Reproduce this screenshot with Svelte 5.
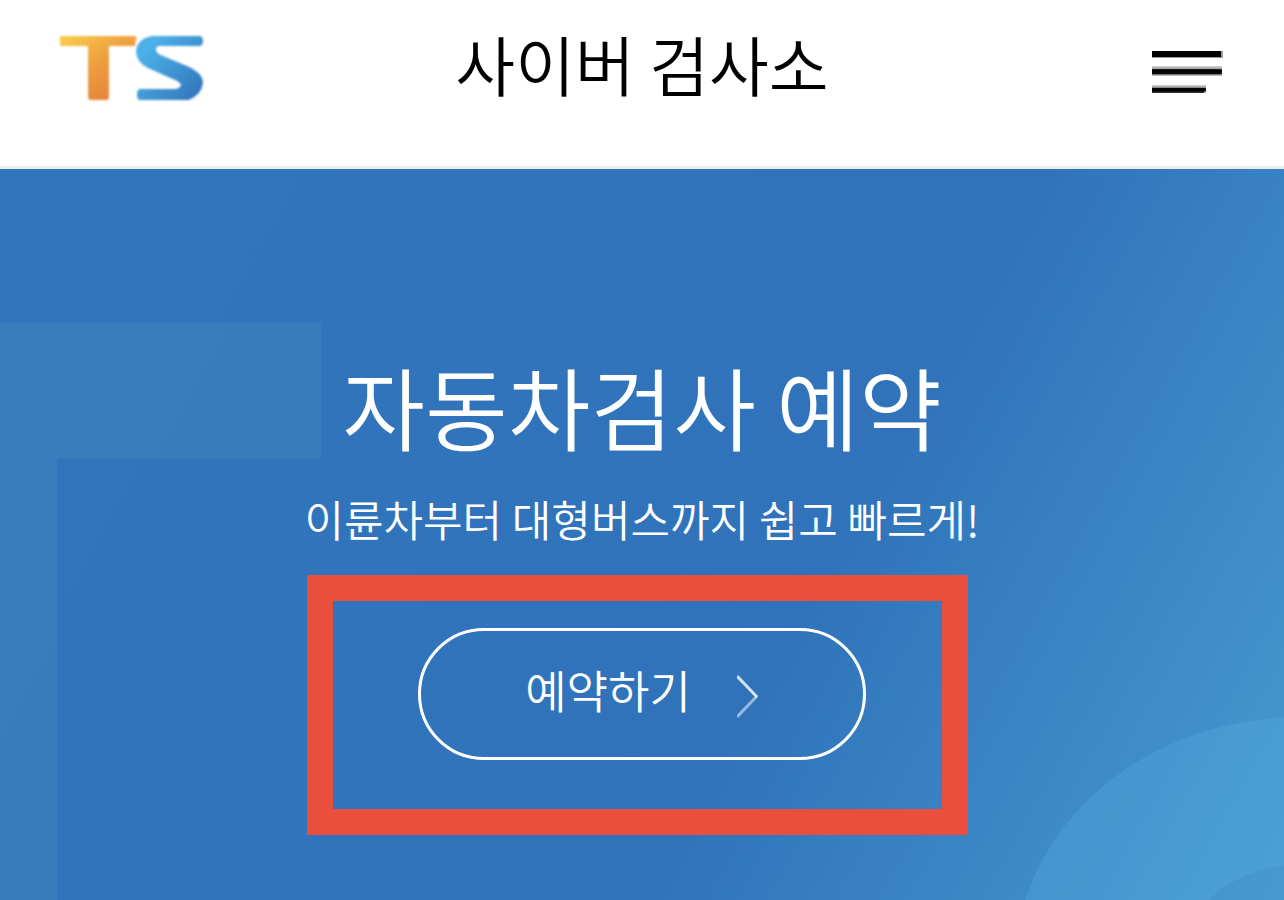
<script>
  const title = '사이버 검사소';
  let menuOpen = $state(false);
</script>

<div class="page">
  <header class="topbar">
    <a class="logo" href="#home" aria-label="TS">
      <svg width="144" height="65" viewBox="0 0 144 65" aria-hidden="true">
        <defs>
          <linearGradient id="orange" x1="0" y1="0" x2="0.7" y2="1">
            <stop offset="0" stop-color="#fbd04a" />
            <stop offset="0.45" stop-color="#eea23f" />
            <stop offset="1" stop-color="#e6823a" />
          </linearGradient>
          <linearGradient id="blue" x1="0" y1="0" x2="1" y2="0.8">
            <stop offset="0.2" stop-color="#4cb0e8" />
            <stop offset="1" stop-color="#3378be" />
          </linearGradient>
          <filter id="soften"><feGaussianBlur stdDeviation="1" /></filter>
        </defs>
        <g filter="url(#soften)">
          <path fill="url(#orange)" d="M0 0H74Q77 0 76 3L75 10H49V61Q49 64 46 64H31Q28 64 28 61V10H0Z" />
          <path
            fill="url(#blue)"
            d="M92 0H139Q143 0 143 5Q143 10 139 10H99Q96 10 96 14Q97 18 103 20L127 30Q143 37 143 47Q142 58 129 64H80Q77 64 77 59Q77 53 80 53H114Q120 53 121 49Q120 46 115 44L88 32Q76 26 76 15Q77 3 92 0Z"
          />
        </g>
      </svg>
    </a>
    <h1>{title}</h1>
    <button
      class="menu"
      aria-label="메뉴"
      aria-expanded={menuOpen}
      onclick={() => (menuOpen = !menuOpen)}
    >
      <svg width="72" height="44" viewBox="0 0 72 44" aria-hidden="true">
        <defs>
          <linearGradient id="bar" x1="0" y1="0" x2="0" y2="1">
            <stop offset="0" stop-color="#000" stop-opacity="0.15" />
            <stop offset="0.3" stop-color="#000" stop-opacity="0.4" />
            <stop offset="0.45" stop-color="#000" />
            <stop offset="0.75" stop-color="#000" stop-opacity="0.85" />
            <stop offset="1" stop-color="#000" stop-opacity="0.1" />
          </linearGradient>
        </defs>
        <rect width="69" height="6" />
        <rect width="71" height="7" opacity="0.4" />
        <rect y="15" width="70" height="10" fill="url(#bar)" />
        <rect y="18" width="69" height="5" opacity="0.7" />
        <rect y="34" width="54" height="8" fill="url(#bar)" />
        <rect y="37" width="52" height="5" opacity="0.75" />
      </svg>
    </button>
  </header>

  <main class="hero">
    <svg class="shape-t" width="321" height="600" viewBox="0 0 321 600" aria-hidden="true">
      <path d="M0 0H321V136H57V600H0Z" />
    </svg>
    <svg class="shape-ring" width="276" height="184" viewBox="0 0 276 184" aria-hidden="true">
      <path
        fill-rule="evenodd"
        d="M7 251A285 250 0 0 1 577 251A285 250 0 0 1 7 251ZM170 251A122 102 0 0 1 414 251A122 102 0 0 1 170 251Z"
      />
    </svg>

    <h2>자동차검사 예약</h2>
    <p>이륜차부터 대형버스까지 쉽고 빠르게!</p>
    <div class="highlight">
      <a class="reserve" href="#reserve">
        <span>예약하기</span>
        <svg width="22" height="44" viewBox="0 0 22 44" aria-hidden="true">
          <path d="M0 2L20 23" opacity="0.8" />
          <path d="M20 22L0 43" opacity="0.5" />
        </svg>
      </a>
    </div>
  </main>
</div>

<style>
  :global(body) {
    margin: 0;
  }

  .page {
    display: flex;
    flex-direction: column;
    min-height: 100vh;
    font-family: "Noto Sans CJK KR", sans-serif;
    font-weight: 350;
    background: #fff;
  }

  .topbar {
    display: grid;
    grid-template-columns: 1fr auto 1fr;
    align-items: start;
    box-sizing: border-box;
    height: 169px;
    padding: 17px 60px 0;
    border-bottom: 3px solid #ececec;
  }

  .logo {
    padding-top: 19px;
  }

  .logo svg,
  .menu svg {
    display: block;
    overflow: visible;
  }

  h1,
  h2,
  p {
    margin: 0;
    font-weight: 350;
  }

  h1 {
    font-size: 65px;
    line-height: 92px;
    color: #000;
  }

  .menu {
    justify-self: end;
    padding: 34px 0 0;
    border: 0;
    background: none;
    cursor: pointer;
  }

  .hero {
    position: relative;
    flex: 1;
    display: flex;
    flex-direction: column;
    align-items: center;
    overflow: hidden;
    padding: 176px 24px 64px;
    background: linear-gradient(119deg, #3175bc 0%, #3073ba 62%, #3984c4 78%, #479ad0 100%);
    color: #fff;
    text-align: center;
  }

  .shape-t {
    position: absolute;
    top: 154px;
    left: 0;
    fill: rgba(90, 160, 205, 0.2);
  }

  .shape-ring {
    position: absolute;
    right: 0;
    bottom: 0;
    fill: rgba(90, 175, 230, 0.3);
  }

  h2,
  p,
  .highlight {
    position: relative;
  }

  h2 {
    font-size: 90px;
    line-height: 120px;
  }

  p {
    margin-top: 21px;
    font-size: 43px;
    line-height: 64px;
  }

  .highlight {
    margin: 25px 9px 0 0;
    padding: 27px 76px 49px 85px;
    border: 26px solid #ea4e3d;
  }

  .reserve {
    display: flex;
    align-items: center;
    justify-content: center;
    gap: 46px;
    box-sizing: border-box;
    width: 448px;
    height: 132px;
    border: 3px solid #fff;
    border-radius: 66px;
    color: #fff;
    font-size: 45px;
    line-height: 64px;
    text-decoration: none;
  }

  .reserve span {
    padding-bottom: 8px;
  }

  .reserve svg {
    padding-top: 4px;
    fill: none;
    stroke: #fff;
    stroke-width: 3px;
  }
</style>
